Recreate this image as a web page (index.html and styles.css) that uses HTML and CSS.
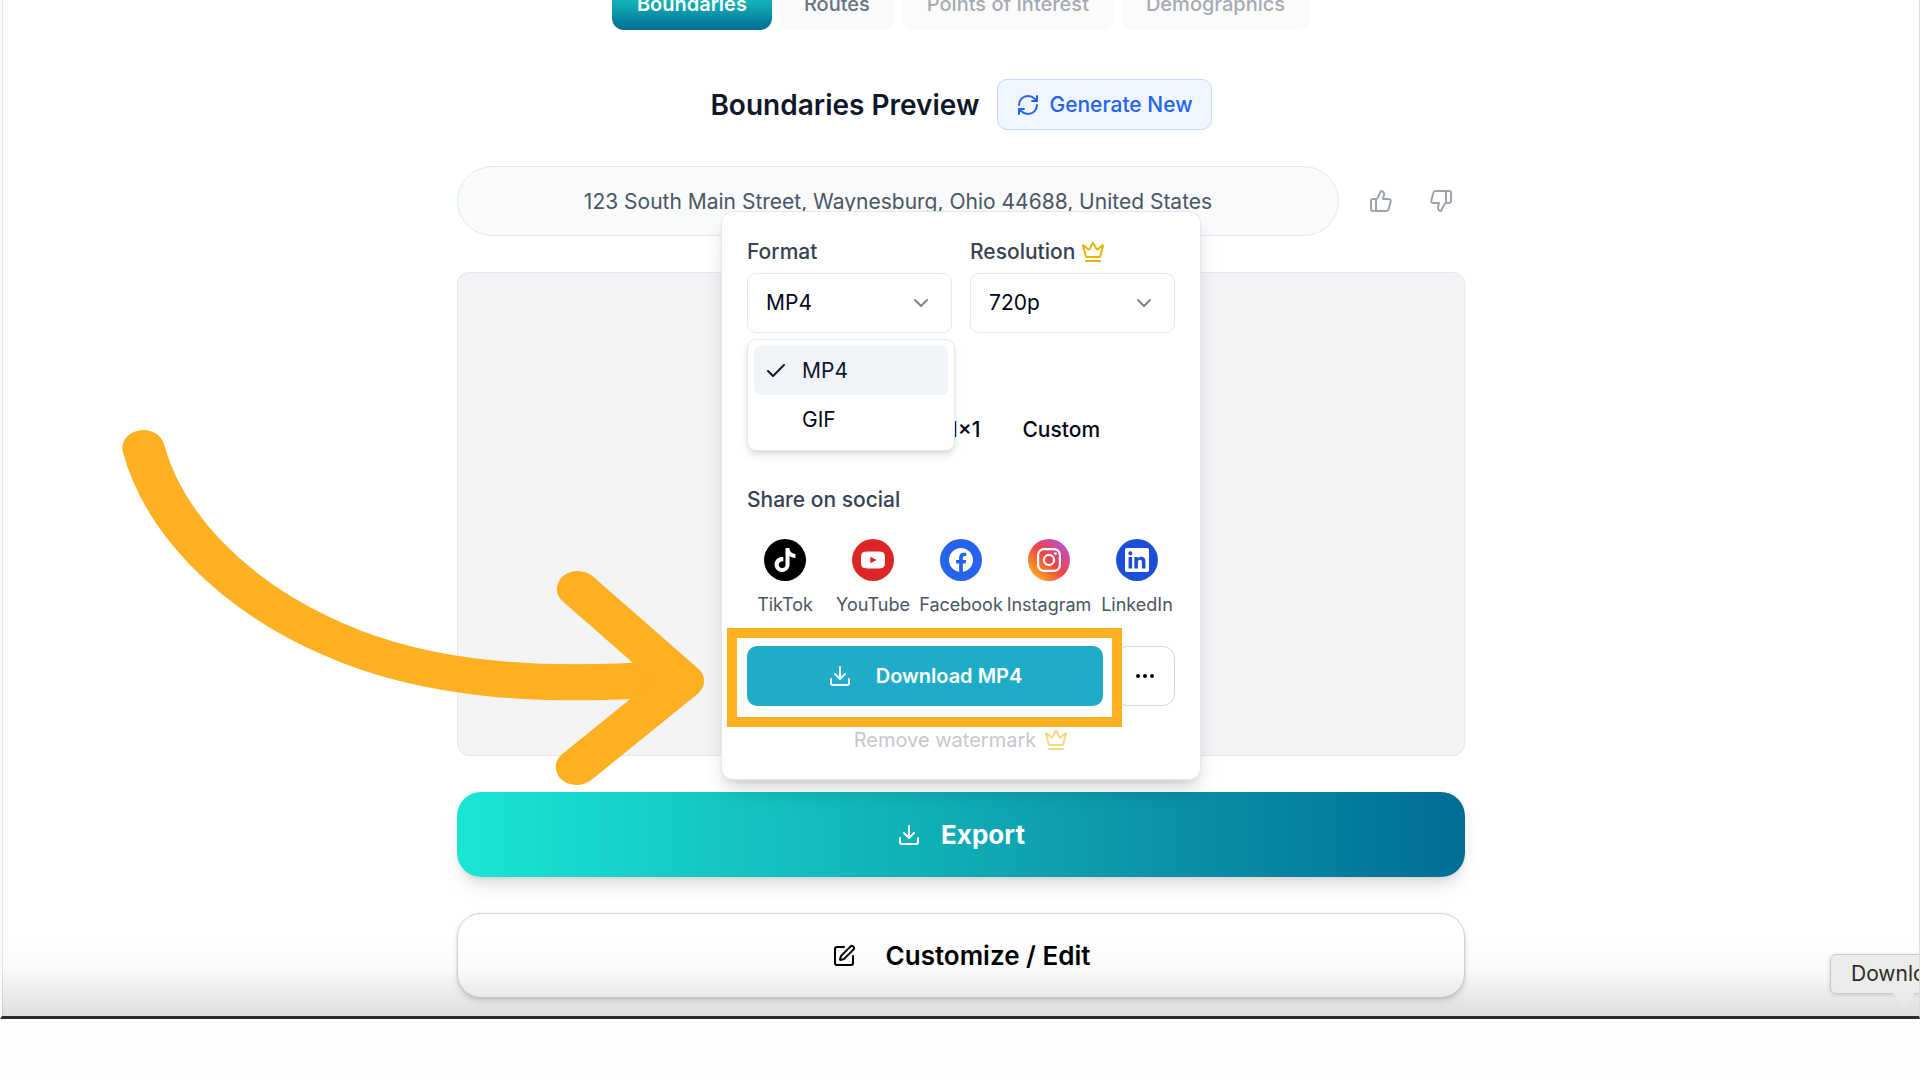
FILE: index.html
```
<!DOCTYPE html>
<html lang="en">
<head>
    <meta charset="UTF-8">
    <meta name="viewport" content="width=device-width, initial-scale=1.0">
    <title>Boundaries Preview</title>
    <link rel="stylesheet" href="styles.css">
</head>
<body>
<main class="screen">
    <div class="content">
        <nav class="tabs">
            <button class="tab active">Boundaries</button>
            <button class="tab">Routes</button>
            <button class="tab" disabled>Points of Interest</button>
            <button class="tab" disabled>Demographics</button>
        </nav>

        <header class="heading">
            <h1>Boundaries Preview</h1>
            <button class="generate">
                <svg class="icon" viewBox="0 0 24 24"><path d="M3 12a9 9 0 0 1 9-9 9.75 9.75 0 0 1 6.74 2.74L21 8"/><path d="M21 3v5h-5"/><path d="M21 12a9 9 0 0 1-9 9 9.75 9.75 0 0 1-6.74-2.74L3 16"/><path d="M8 16H3v5"/></svg>
                Generate New
            </button>
        </header>

        <div class="address-row">
            <p class="address">123 South Main Street, Waynesburg, Ohio 44688, United States</p>
            <div class="votes">
                <button class="vote" aria-label="Like">
                    <svg class="icon" viewBox="0 0 24 24"><path d="M7 10v12"/><path d="M15 5.88 14 10h5.83a2 2 0 0 1 1.92 2.56l-2.33 8A2 2 0 0 1 17.5 22H4a2 2 0 0 1-2-2v-8a2 2 0 0 1 2-2h2.76a2 2 0 0 0 1.79-1.11L12 2a3.13 3.13 0 0 1 3 3.88Z"/></svg>
                </button>
                <button class="vote" aria-label="Dislike">
                    <svg class="icon" viewBox="0 0 24 24"><path d="M17 14V2"/><path d="M9 18.12 10 14H4.17a2 2 0 0 1-1.92-2.56l2.33-8A2 2 0 0 1 6.5 2H20a2 2 0 0 1 2 2v8a2 2 0 0 1-2 2h-2.76a2 2 0 0 0-1.79 1.11L12 22a3.13 3.13 0 0 1-3-3.88Z"/></svg>
                </button>
            </div>
        </div>

        <section class="preview">
            <!-- pointer arrow -->
            <svg class="arrow" viewBox="102.6 430 500 356" preserveAspectRatio="none">
                <path d="M122.6 448C139.3 520 194.9 593 284.6 639C369 683 470 687 566 679"/>
                <path d="M494 589L583.8 681L493 767"/>
            </svg>
        </section>

        <div class="export-wrap">
            <button class="big-button export">
                <svg class="icon" viewBox="0 0 24 24"><path d="M21 15v4a2 2 0 0 1-2 2H5a2 2 0 0 1-2-2v-4"/><path d="M7 10l5 5 5-5"/><path d="M12 15V3"/></svg>
                Export
            </button>

            <!-- export popover -->
            <div class="popover">
                <div class="fields">
                    <div class="field">
                        <label for="format">Format</label>
                        <div class="select-box">
                            <select id="format">
                                <option>MP4</option>
                                <option>GIF</option>
                            </select>
                            <svg class="icon chevron" viewBox="0 0 24 24"><path d="m6 9 6 6 6-6"/></svg>
                            <div class="menu">
                                <button class="menu-item selected">
                                    <svg class="icon" viewBox="0 0 24 24"><path d="M20 6 9 17l-5-5"/></svg>
                                    MP4
                                </button>
                                <button class="menu-item">GIF</button>
                            </div>
                        </div>
                    </div>
                    <div class="field">
                        <label for="resolution">Resolution
                            <svg class="icon crown" viewBox="0 0 24 24"><path d="M11.562 3.266a.5.5 0 0 1 .876 0L15.39 8.87a1 1 0 0 0 1.516.294L21.183 5.5a.5.5 0 0 1 .798.519l-2.834 10.246a1 1 0 0 1-.956.734H5.81a1 1 0 0 1-.957-.734L2.02 6.02a.5.5 0 0 1 .798-.519l4.276 3.664a1 1 0 0 0 1.516-.294z"/><path d="M5 21h14"/></svg>
                        </label>
                        <div class="select-box">
                            <select id="resolution">
                                <option>720p</option>
                            </select>
                            <svg class="icon chevron" viewBox="0 0 24 24"><path d="m6 9 6 6 6-6"/></svg>
                        </div>
                    </div>
                </div>

                <div class="ratios">
                    <button class="ratio">1×1</button>
                    <button class="ratio">Custom</button>
                </div>

                <h2>Share on social</h2>
                <div class="socials">
                    <a class="social" href="#">
                        <span class="badge tiktok"><svg viewBox="0 0 24 24"><path d="M12.525.02c1.31-.02 2.61-.01 3.91-.02.08 1.53.63 3.09 1.75 4.17 1.12 1.11 2.7 1.62 4.24 1.79v4.03c-1.44-.05-2.89-.35-4.2-.97-.57-.26-1.1-.59-1.62-.93-.01 2.92.01 5.84-.02 8.75-.08 1.4-.54 2.79-1.35 3.94-1.31 1.92-3.58 3.17-5.91 3.21-1.43.08-2.86-.31-4.08-1.03-2.02-1.19-3.44-3.37-3.65-5.71-.02-.5-.03-1-.01-1.49.18-1.9 1.12-3.72 2.58-4.96 1.66-1.44 3.98-2.13 6.15-1.72.02 1.48-.04 2.96-.04 4.44-.99-.32-2.15-.23-3.02.37-.63.41-1.11 1.04-1.36 1.75-.21.51-.15 1.07-.14 1.61.24 1.64 1.82 3.02 3.5 2.87 1.12-.01 2.19-.66 2.77-1.61.19-.33.4-.67.41-1.06.1-1.79.06-3.57.07-5.36.01-4.03-.01-8.05.02-12.07z"/></svg></span>
                        TikTok
                    </a>
                    <a class="social" href="#">
                        <span class="badge youtube"><svg viewBox="0 0 24 24"><path fill-rule="evenodd" d="M23.498 6.186a3.016 3.016 0 0 0-2.122-2.136C19.505 3.545 12 3.545 12 3.545s-7.505 0-9.377.505A3.017 3.017 0 0 0 .502 6.186C0 8.07 0 12 0 12s0 3.93.502 5.814a3.016 3.016 0 0 0 2.122 2.136c1.871.505 9.376.505 9.376.505s7.505 0 9.377-.505a3.015 3.015 0 0 0 2.122-2.136C24 15.93 24 12 24 12s0-3.93-.502-5.814zM9.3 15.2V8.8L15.5 12z"/></svg></span>
                        YouTube
                    </a>
                    <a class="social" href="#">
                        <span class="badge facebook"><svg viewBox="0 0 24 24"><path d="M24 12.073c0-6.627-5.373-12-12-12s-12 5.373-12 12c0 5.99 4.388 10.954 10.125 11.854v-8.385H7.078v-3.47h3.047V9.43c0-3.007 1.792-4.669 4.533-4.669 1.312 0 2.686.235 2.686.235v2.953H15.83c-1.491 0-1.956.925-1.956 1.874v2.25h3.328l-.532 3.47h-2.796v8.385C19.612 23.027 24 18.062 24 12.073z"/></svg></span>
                        Facebook
                    </a>
                    <a class="social" href="#">
                        <span class="badge instagram"><svg viewBox="0 0 24 24"><path fill-rule="evenodd" d="M7 0h10a7 7 0 0 1 7 7v10a7 7 0 0 1-7 7H7a7 7 0 0 1-7-7V7a7 7 0 0 1 7-7zM7 2.2A4.8 4.8 0 0 0 2.2 7v10A4.8 4.8 0 0 0 7 21.8h10a4.8 4.8 0 0 0 4.8-4.8V7A4.8 4.8 0 0 0 17 2.2zM12 5.84a6.16 6.16 0 1 1 0 12.32 6.16 6.16 0 0 1 0-12.32zM12 8a4 4 0 1 0 0 8 4 4 0 0 0 0-8z"/><circle cx="18.4" cy="5.6" r="1.44"/></svg></span>
                        Instagram
                    </a>
                    <a class="social" href="#">
                        <span class="badge linkedin"><svg viewBox="0 0 24 24"><path d="M20.447 20.452h-3.554v-5.569c0-1.328-.027-3.037-1.852-3.037-1.853 0-2.136 1.445-2.136 2.939v5.667H9.351V9h3.414v1.561h.046c.477-.9 1.637-1.85 3.37-1.85 3.601 0 4.267 2.37 4.267 5.455v6.286zM5.337 7.433a2.062 2.062 0 0 1-2.063-2.065 2.064 2.064 0 1 1 2.063 2.065zm1.782 13.019H3.555V9h3.564v11.452zM22.225 0H1.771C.792 0 0 .774 0 1.729v20.542C0 23.227.792 24 1.771 24h20.451C23.2 24 24 23.227 24 22.271V1.729C24 .774 23.2 0 22.222 0h.003z"/></svg></span>
                        LinkedIn
                    </a>
                </div>

                <div class="actions">
                    <div class="download-wrap">
                        <button class="download">
                            <svg class="icon" viewBox="0 0 24 24"><path d="M21 15v4a2 2 0 0 1-2 2H5a2 2 0 0 1-2-2v-4"/><path d="M7 10l5 5 5-5"/><path d="M12 15V3"/></svg>
                            Download MP4
                        </button>
                        <div class="highlight"></div>
                    </div>
                    <button class="more" aria-label="More options">
                        <svg class="icon" viewBox="0 0 24 24"><circle cx="5" cy="12" r="1"/><circle cx="12" cy="12" r="1"/><circle cx="19" cy="12" r="1"/></svg>
                    </button>
                </div>

                <button class="watermark" disabled>
                    Remove watermark
                    <svg class="icon crown" viewBox="0 0 24 24"><path d="M11.562 3.266a.5.5 0 0 1 .876 0L15.39 8.87a1 1 0 0 0 1.516.294L21.183 5.5a.5.5 0 0 1 .798.519l-2.834 10.246a1 1 0 0 1-.956.734H5.81a1 1 0 0 1-.957-.734L2.02 6.02a.5.5 0 0 1 .798-.519l4.276 3.664a1 1 0 0 0 1.516-.294z"/><path d="M5 21h14"/></svg>
                </button>
            </div>
        </div>

        <button class="big-button customize">
            <svg class="icon" viewBox="0 0 24 24"><path d="M12 3H5a2 2 0 0 0-2 2v14a2 2 0 0 0 2 2h14a2 2 0 0 0 2-2v-7"/><path d="M18.375 2.625a1 1 0 0 1 3 3l-9.013 9.014a2 2 0 0 1-.853.505l-2.873.84a.5.5 0 0 1-.62-.62l.84-2.873a2 2 0 0 1 .506-.852z"/></svg>
            Customize / Edit
        </button>
    </div>

    <div class="tooltip">Downloads</div>
</main>
</body>
</html>
```
FILE: styles.css
```
* {
    box-sizing: border-box;
}

body {
    margin: 0;
    background: #fefefe;
    font-family: Inter, "Liberation Sans", sans-serif;
    font-size: 21px;
    line-height: 28px;
    color: #020617;
}

h1, h2, p {
    margin: 0;
}

button, select {
    font: inherit;
    color: inherit;
    background: none;
    border: none;
    padding: 0;
    cursor: pointer;
}

a {
    color: inherit;
    text-decoration: none;
}

.icon {
    width: 24px;
    height: 24px;
    flex: none;
    fill: none;
    stroke: currentColor;
    stroke-width: 2;
    stroke-linecap: round;
    stroke-linejoin: round;
}

/* screen */
.screen {
    position: relative;
    overflow: hidden;
    background: #fff;
    border-left: 2px solid #f8fafc;
    border-right: 1px solid #d9dce1;
    border-bottom: 3px solid #2b2b2b;
    box-shadow: inset 1px 0 #e2e5ea;
    padding: 0 0 18px 1px;
}

/* shade along the bottom edge */
.screen::after {
    content: "";
    position: absolute;
    left: 0;
    right: 0;
    bottom: 0;
    height: 80px;
    background: linear-gradient(to bottom, rgba(0,0,0,0) 0%, rgba(0,0,0,0.02) 40%, rgba(0,0,0,0.13) 100%);
    pointer-events: none;
}

.content {
    max-width: 1008px;
    margin: -22px auto 0;
    display: flex;
    flex-direction: column;
    gap: 36px;
}

/* tabs */
.tabs {
    display: flex;
    justify-content: center;
    gap: 7px;
    margin-bottom: 13px;
}

.tab {
    height: 52px;
    padding: 0 25px;
    border-radius: 12px;
    background: #f9fafb;
    color: #6b7280;
    font-size: 20px;
    font-weight: 500;
}

.tab.active {
    background: linear-gradient(to bottom, #1ae6d4, #0d9fad 60%, #006d97);
    color: #fff;
    font-weight: 600;
}

.tab:disabled {
    opacity: 0.6;
}

/* heading */
.heading {
    display: flex;
    justify-content: center;
    align-items: center;
    gap: 18px;
}

.heading h1 {
    font-size: 28px;
    font-weight: 600;
    color: #0f172a;
}

.generate {
    display: flex;
    align-items: center;
    gap: 9px;
    height: 51px;
    padding: 0 18px;
    border: 1px solid #bfdbfe;
    border-radius: 10px;
    background: #eff6ff;
    color: #2563eb;
    font-weight: 500;
}

/* address */
.address-row {
    display: flex;
    align-items: center;
    gap: 24px;
}

.address {
    flex: 1;
    padding: 21px 20px 19px;
    border: 1px solid #e2e8f0;
    border-radius: 36px;
    background: #f8fafc;
    color: #4b5563;
    text-align: center;
}

.votes {
    display: flex;
    gap: 24px;
    padding-right: 6px;
}

.vote {
    display: flex;
    padding: 6px;
    color: #9ca3af;
}

/* preview */
.preview {
    position: relative;
    height: 484px;
    border: 1px solid #e5e7eb;
    border-radius: 12px;
    background: #f3f4f6;
}

.arrow {
    position: absolute;
    z-index: 3;
    left: -338px;
    top: 157px;
    width: 585px;
    height: 356px;
    fill: none;
    stroke: #fdb022;
    stroke-width: 36;
    stroke-linecap: round;
    stroke-linejoin: round;
}

/* large buttons */
.export-wrap {
    position: relative;
}

.big-button {
    display: flex;
    justify-content: center;
    align-items: center;
    width: 100%;
    height: 85px;
    border-radius: 24px;
    font-size: 26px;
}

.export {
    gap: 20px;
    color: #fff;
    font-weight: 700;
    background: linear-gradient(to right, #1ae6d4, #0d9fad 60%, #006d97);
    box-shadow: 0 12px 18px -4px rgba(0,0,0,0.12), 0 5px 8px -4px rgba(0,0,0,0.1);
}

.customize {
    gap: 30px;
    color: #000;
    font-weight: 600;
    background: #fff;
    border: 1px solid #d1d5db;
    box-shadow: 0 4px 6px rgba(0,0,0,0.1), 0 1px 3px rgba(0,0,0,0.1);
}

/* popover */
.popover {
    position: absolute;
    z-index: 2;
    left: 0;
    right: 0;
    bottom: calc(100% + 12px);
    width: 480px;
    margin: 0 auto;
    padding: 26px 25px 25px;
    border: 1px solid #e5e7eb;
    border-radius: 12px;
    background: #fff;
    box-shadow: 0 14px 22px -4px rgba(0,0,0,0.14), 0 5px 9px -4px rgba(0,0,0,0.12);
}

.fields {
    display: grid;
    grid-template-columns: 1fr 1fr;
    gap: 18px;
}

.field label {
    display: flex;
    align-items: center;
    gap: 6px;
    margin-bottom: 7px;
    color: #374151;
    font-weight: 500;
}

.crown {
    color: #eab308;
}

.select-box {
    position: relative;
}

.select-box select {
    appearance: none;
    display: block;
    width: 100%;
    height: 60px;
    padding: 0 18px;
    border: 1px solid #e2e8f0;
    border-radius: 9px;
    background: #fff;
}

.chevron {
    position: absolute;
    right: 19px;
    top: 18px;
    color: #808289;
    pointer-events: none;
}

.menu {
    position: absolute;
    z-index: 1;
    top: calc(100% + 6px);
    left: 0;
    width: calc(100% + 3px);
    padding: 6px;
    border: 1px solid #e2e8f0;
    border-radius: 9px;
    background: #fff;
    box-shadow: 0 5px 8px -1px rgba(0,0,0,0.12), 0 2px 4px -2px rgba(0,0,0,0.1);
}

.menu-item {
    display: flex;
    align-items: center;
    gap: 14px;
    width: 100%;
    height: 49px;
    padding-left: 48px;
    border-radius: 6px;
}

.menu-item.selected {
    padding-left: 10px;
    background: #f1f5f9;
    color: #0f172a;
}

.ratios {
    display: flex;
    gap: 6px;
    margin: 67px 0 26px;
    padding-left: 184px;
}

.ratio {
    height: 60px;
    padding: 0 18px;
    font-weight: 500;
}

.popover h2 {
    color: #374151;
    font-size: 21px;
    font-weight: 500;
    margin-bottom: 25px;
}

.socials {
    display: grid;
    grid-template-columns: repeat(5, 76px);
    justify-content: space-between;
    margin-bottom: 27px;
}

.social {
    display: flex;
    flex-direction: column;
    align-items: center;
    gap: 10px;
    color: #4b5563;
    font-size: 18px;
    white-space: nowrap;
}

.badge {
    display: flex;
    justify-content: center;
    align-items: center;
    width: 42px;
    height: 42px;
    border-radius: 50%;
}

.badge svg {
    width: 24px;
    height: 24px;
    fill: #fff;
}

.tiktok { background: #000; }
.youtube { background: #dc2626; }
.facebook { background: #2563eb; }
.instagram { background: linear-gradient(45deg, #facc15, #ef4444 50%, #a855f7); }
.linkedin { background: #1d4ed8; }

.actions {
    display: flex;
    gap: 12px;
}

.download-wrap {
    position: relative;
    flex: 1;
}

.download {
    display: flex;
    justify-content: center;
    align-items: center;
    gap: 24px;
    width: 100%;
    height: 60px;
    border-radius: 10px;
    background: #1eacc8;
    color: #fff;
    font-size: 20px;
    font-weight: 600;
}

.highlight {
    position: absolute;
    inset: -18px -19px -21px -20px;
    border: 10px solid #fdb022;
    pointer-events: none;
}

.more {
    display: flex;
    justify-content: center;
    align-items: center;
    width: 60px;
    height: 60px;
    border: 1px solid #d1d5db;
    border-radius: 12px;
}

.watermark {
    display: flex;
    align-items: center;
    gap: 8px;
    margin: 20px auto 0;
    color: #8a919e;
    font-size: 20px;
    opacity: 0.5;
}

/* tooltip cut off by the window edge */
.tooltip {
    position: absolute;
    z-index: 1;
    left: calc(100% - 89px);
    bottom: 22px;
    padding: 5px 20px;
    border: 1px solid #c9c9c9;
    border-radius: 6px;
    background: #ebebea;
    color: #2b2b2b;
    box-shadow: 0 1px 4px rgba(0,0,0,0.15);
}

.tooltip::after {
    content: "";
    position: absolute;
    left: 62px;
    top: 100%;
    width: 22px;
    height: 14px;
    background: #ebebea;
    clip-path: polygon(0 0, 100% 0, 50% 100%);
}
```
